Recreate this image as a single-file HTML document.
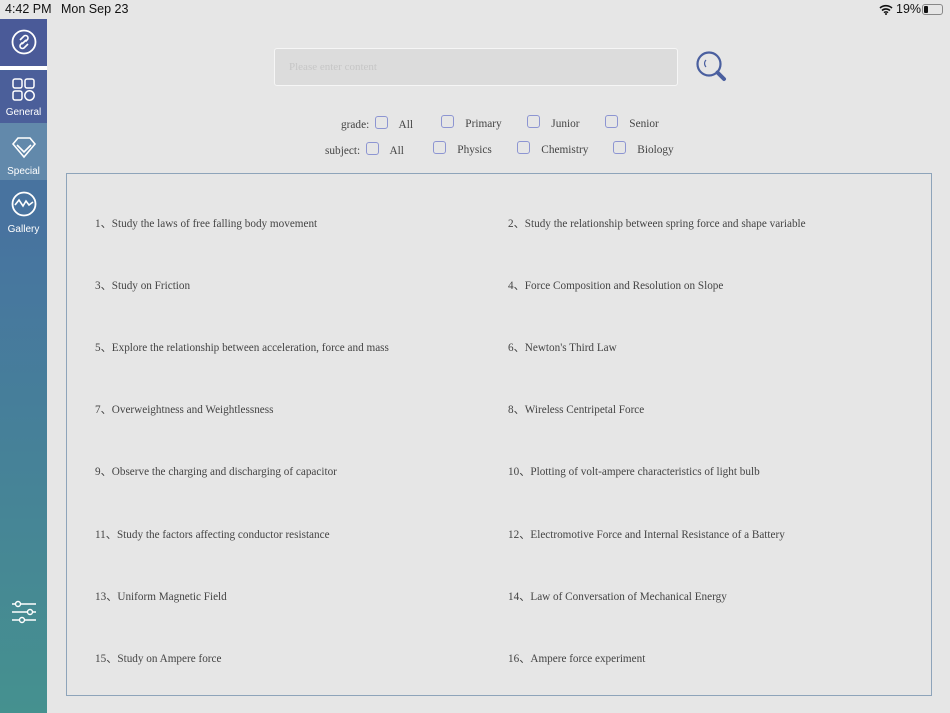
<!DOCTYPE html>
<html><head><style>
body{margin:0;width:950px;height:713px;background:#e6e6e6;position:relative;overflow:hidden;font-family:"Liberation Serif",serif;color:#444}
.status{position:absolute;top:0;left:0;width:950px;height:19px;font-family:"Liberation Sans",sans-serif;font-size:12.5px;color:#111}
.side{position:absolute;left:0;top:19px;width:47px;height:694px;background:linear-gradient(#4a5b98,#47769f 35%,#45918f)}
.it{position:absolute;left:0;width:47px;color:#fff;font-family:"Liberation Sans",sans-serif;font-size:10px;text-align:center}
.box{position:absolute;left:66px;top:173px;width:864px;height:521px;border:1px solid #8ea4ba}
.r{position:absolute;font-size:11.2px;white-space:nowrap}
.cb{display:inline-block;width:11px;height:11px;border:1.3px solid #8d95d2;border-radius:3px;vertical-align:-1px}
.f{position:absolute;font-size:11.3px;white-space:nowrap}
</style></head><body>
<div class="status"><span style="position:absolute;left:5px;top:2px">4:42 PM</span><span style="position:absolute;left:61px;top:2px">Mon Sep 23</span>
<svg style="position:absolute;left:879px;top:4px" width="14" height="11" viewBox="0 0 14 11"><path d="M1 4a9 9 0 0 1 12 0M3 6.5a6 6 0 0 1 8 0M5 8.7a3 3 0 0 1 4 0" stroke="#111" stroke-width="1.6" fill="none"/><circle cx="7" cy="10" r="1" fill="#111"/></svg>
<span style="position:absolute;left:896px;top:2px">19%</span>
<div style="position:absolute;left:922px;top:4px;width:19px;height:9px;border:1px solid #888;border-radius:3px"><div style="width:4px;height:7px;margin:1px;background:#111;border-radius:1px"></div></div></div>
<div class="side">
<div class="it" style="top:0;height:47px;background:#4a5a98"><svg style="margin-top:10px" width="26" height="26" viewBox="0 0 26 26"><circle cx="13" cy="13" r="11.5" stroke="#fff" stroke-width="1.8" fill="none"/><path d="M9 11l4-4a2.5 2.5 0 0 1 3.5 3.5l-2 2M17 15l-4 4a2.5 2.5 0 0 1-3.5-3.5l2-2M11 15l4-4" stroke="#fff" stroke-width="1.6" fill="none"/></svg></div>
<div style="position:absolute;top:47px;left:0;width:47px;height:4px;background:#fff"></div>
<div class="it" style="top:52px;height:52px;background:#4b5f9a"><svg style="margin-top:7px" width="26" height="24" viewBox="0 0 26 24"><rect x="2" y="1" width="9" height="9" rx="2" stroke="#fff" stroke-width="1.5" fill="none"/><rect x="14" y="1" width="9" height="9" rx="2" stroke="#fff" stroke-width="1.5" fill="none"/><rect x="2" y="13" width="9" height="9" rx="2" stroke="#fff" stroke-width="1.5" fill="none"/><circle cx="18.5" cy="17.5" r="4.7" stroke="#fff" stroke-width="1.5" fill="none"/></svg><div style="margin-top:2px">General</div></div>
<div class="it" style="top:104px;height:57px;background:#6289ab"><svg style="margin-top:13px" width="26" height="24" viewBox="0 0 26 24"><path d="M7 2h12l5 6-11 13L2 8z" stroke="#fff" stroke-width="1.6" fill="none"/><path d="M6 9l7 7 7-7" stroke="#fff" stroke-width="1.6" fill="none"/></svg><div style="margin-top:3px">Special</div></div>
<div class="it" style="top:161px;height:57px;background:#48739f"><svg style="margin-top:11px" width="26" height="26" viewBox="0 0 26 26"><circle cx="13" cy="13" r="11.5" stroke="#fff" stroke-width="1.8" fill="none"/><path d="M4 14l4-5 4 6 3-5 3 4 4-3" stroke="#fff" stroke-width="1.6" fill="none"/></svg><div style="margin-top:4px">Gallery</div></div>
<svg style="position:absolute;left:11px;top:581px" width="26" height="24" viewBox="0 0 26 24"><path d="M1 4h24M1 12h24M1 20h24" stroke="#fff" stroke-width="1.5"/><circle cx="7" cy="4" r="2.5" fill="#45888f" stroke="#fff" stroke-width="1.4"/><circle cx="19" cy="12" r="2.5" fill="#45888f" stroke="#fff" stroke-width="1.4"/><circle cx="11" cy="20" r="2.5" fill="#45888f" stroke="#fff" stroke-width="1.4"/></svg>
</div>
<div style="position:absolute;left:274px;top:48px;width:402px;height:36px;background:#dcdcdc;border:1px solid #f6f6f6;border-radius:3px"><span style="position:absolute;left:14px;top:12px;font-size:11px;color:#c6c6c6">Please enter content</span></div>
<svg style="position:absolute;left:695px;top:51px" width="33" height="31" viewBox="0 0 33 31"><circle cx="14" cy="13" r="11.5" stroke="#4a5f9f" stroke-width="2.2" fill="none"/><path d="M22.5 21.5l6.5 6.5" stroke="#4a5f9f" stroke-width="4" stroke-linecap="round"/><path d="M11 9a5 5 0 0 0 0 7" stroke="#4a5f9f" stroke-width="1.2" fill="none"/></svg>
<div class="f" style="left:341px;top:116px">grade:&nbsp; <span class="cb"></span>&nbsp;&nbsp;&nbsp; All</div>
<div class="f" style="left:441px;top:115px"><span class="cb"></span>&nbsp;&nbsp;&nbsp; Primary</div>
<div class="f" style="left:527px;top:115px"><span class="cb"></span>&nbsp;&nbsp;&nbsp; Junior</div>
<div class="f" style="left:605px;top:115px"><span class="cb"></span>&nbsp;&nbsp;&nbsp; Senior</div>
<div class="f" style="left:325px;top:142px">subject:&nbsp; <span class="cb"></span>&nbsp;&nbsp;&nbsp; All</div>
<div class="f" style="left:433px;top:141px"><span class="cb"></span>&nbsp;&nbsp;&nbsp; Physics</div>
<div class="f" style="left:517px;top:141px"><span class="cb"></span>&nbsp;&nbsp;&nbsp; Chemistry</div>
<div class="f" style="left:613px;top:141px"><span class="cb"></span>&nbsp;&nbsp;&nbsp; Biology</div>
<div class="box"></div>
<div class="r" style="left:95px;top:215px">1、Study the laws of free falling body movement</div>
<div class="r" style="left:508px;top:215px">2、Study the relationship between spring force and shape variable</div>
<div class="r" style="left:95px;top:277px">3、Study on Friction</div>
<div class="r" style="left:508px;top:277px">4、Force Composition and Resolution on Slope</div>
<div class="r" style="left:95px;top:339px">5、Explore the relationship between acceleration, force and mass</div>
<div class="r" style="left:508px;top:339px">6、Newton's Third Law</div>
<div class="r" style="left:95px;top:401px">7、Overweightness and Weightlessness</div>
<div class="r" style="left:508px;top:401px">8、Wireless Centripetal Force</div>
<div class="r" style="left:95px;top:463px">9、Observe the charging and discharging of capacitor</div>
<div class="r" style="left:508px;top:463px">10、Plotting of volt-ampere characteristics of light bulb</div>
<div class="r" style="left:95px;top:526px">11、Study the factors affecting conductor resistance</div>
<div class="r" style="left:508px;top:526px">12、Electromotive Force and Internal Resistance of a Battery</div>
<div class="r" style="left:95px;top:588px">13、Uniform Magnetic Field</div>
<div class="r" style="left:508px;top:588px">14、Law of Conversation of Mechanical Energy</div>
<div class="r" style="left:95px;top:650px">15、Study on Ampere force</div>
<div class="r" style="left:508px;top:650px">16、Ampere force experiment</div>
</body></html>
